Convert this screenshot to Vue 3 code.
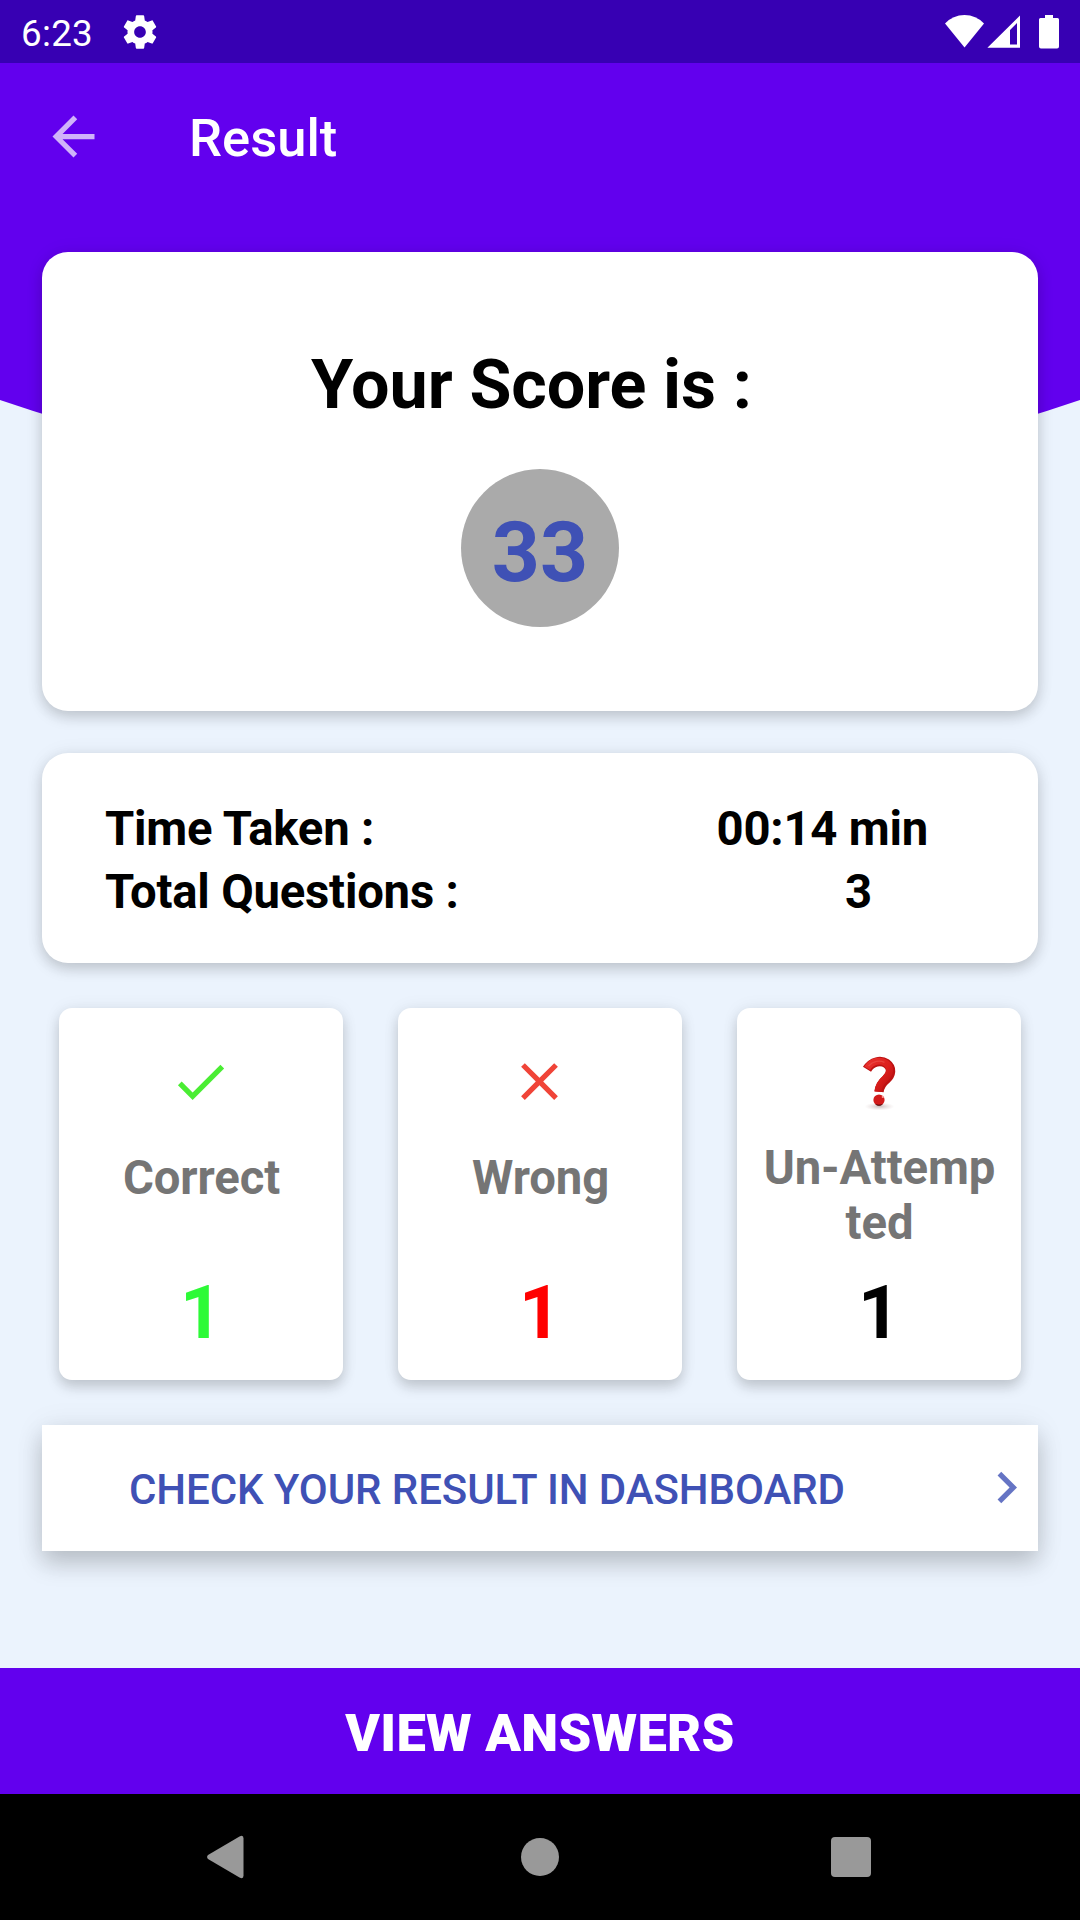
<script setup>
const stats = [
  { key: 'correct', label: 'Correct', count: 1 },
  { key: 'wrong', label: 'Wrong', count: 1 },
  { key: 'skipped', label: 'Un-Attempted', count: 1 },
]
</script>

<template>
  <div class="screen">
    <header class="status">
      <span class="clock">6:23</span>
      <svg class="gear" viewBox="0 0 24 24"><path fill="#fff" d="M19.43 12.98c.04-.32.07-.64.07-.98s-.03-.66-.07-.98l2.11-1.65c.19-.15.24-.42.12-.64l-2-3.46c-.12-.22-.39-.3-.61-.22l-2.49 1c-.52-.4-1.08-.73-1.69-.98l-.38-2.65C14.46 2.18 14.25 2 14 2h-4c-.25 0-.46.18-.49.42l-.38 2.65c-.61.25-1.17.59-1.69.98l-2.49-1c-.23-.09-.49 0-.61.22l-2 3.46c-.13.22-.07.49.12.64l2.11 1.65c-.04.32-.07.65-.07.98s.03.66.07.98l-2.11 1.65c-.19.15-.24.42-.12.64l2 3.46c.12.22.39.3.61.22l2.49-1c.52.4 1.08.73 1.69.98l.38 2.65c.03.24.24.42.49.42h4c.25 0 .46-.18.49-.42l.38-2.65c.61-.25 1.17-.59 1.69-.98l2.49 1c.23.09.49 0 .61-.22l2-3.46c.12-.22.07-.49-.12-.64l-2.11-1.65zM12 15.5c-1.93 0-3.500-1.570-3.500-3.500s1.570-3.500 3.500-3.500 3.500 1.570 3.500 3.500-1.570 3.500-3.500 3.500z" /></svg>
      <svg class="signals" viewBox="0 0 120 36" fill="#fff">
        <path d="M5 9.500Q13 1 24.500 1T44 9.500L24.500 33.500Z" />
        <path fill-rule="evenodd" d="M80 1.500V33.700H47.400ZM77 9 70 16V30.500H77Z" />
        <path d="M105 1h8v3h4.500q1.500 0 1.500 1.500v27q0 2-2 2h-16q-2 0-2-2v-27q0-1.500 1.500-1.500h4.500Z" />
      </svg>
    </header>

    <main class="body">
      <svg class="backdrop" viewBox="0 0 1080 432" preserveAspectRatio="none">
        <path fill="#6200ee" d="M0 0H1080V337Q540 521 0 337Z" />
      </svg>

      <div class="content">
        <nav class="toolbar">
          <svg class="back" viewBox="0 0 24 24"><path fill="#fff" fill-opacity=".7" d="M20 11H7.830l5.590-5.590L12 4l-8 8 8 8 1.410-1.410L7.830 13H20z" /></svg>
          <h1>Result</h1>
        </nav>

        <section class="card score">
          <h2>Your Score is : </h2>
          <div class="circle">33</div>
        </section>

        <section class="card details">
          <div class="row"><span>Time Taken :</span><span>00:14 min</span></div>
          <div class="row total"><span>Total Questions :</span><span>3</span></div>
        </section>

        <section class="stats">
          <article v-for="s in stats" :key="s.key" class="stat" :class="s.key">
            <svg v-if="s.key === 'correct'" viewBox="0 0 24 24"><path fill="#4aed33" d="M9 16.170 4.830 12l-1.420 1.410L9 19 21 7l-1.410-1.410z" /></svg>
            <svg v-else-if="s.key === 'wrong'" viewBox="0 0 24 24"><path fill="#f04438" d="M19 6.410 17.590 5 12 10.590 6.410 5 5 6.410 10.590 12 5 17.590 6.410 19 12 13.410 17.590 19 19 17.590 13.410 12z" /></svg>
            <svg v-else viewBox="0 0 63 63">
              <defs>
                <linearGradient id="tube" x1="0" y1="0" x2="1" y2="1">
                  <stop offset="0" stop-color="#e8302c" /><stop offset=".55" stop-color="#dc1e1c" /><stop offset="1" stop-color="#b81010" />
                </linearGradient>
                <radialGradient id="floor"><stop offset="0" stop-color="#6b4444" stop-opacity=".35" /><stop offset="1" stop-color="#b09090" stop-opacity="0" /></radialGradient>
              </defs>
              <ellipse cx="31.500" cy="56.500" rx="15" ry="4" fill="url(#floor)" />
              <path d="M19 19.300C24 11 33 10 38.500 13.500C44.500 18 43.500 24.500 38 29.500C33.500 33.300 31.500 36.500 31 41.800" fill="none" stroke="#bd1212" stroke-width="9.400" />
              <path d="M19.200 18.200C24 10.300 33 9.500 38 13.200C43.500 17.500 42.500 23.500 37 28.700C32.500 32.500 30.500 36 30 41.800" fill="none" stroke="url(#tube)" stroke-width="6.800" />
              <path d="M20.500 16C25 11 31.500 10 36.500 12.300" fill="none" stroke="#f0605a" stroke-width="1.400" stroke-opacity=".5" />
              <circle cx="31" cy="50" r="5.600" fill="#d21a1a" />
              <path d="M27 54Q31 57.700 35 54Q31 55.400 27 54Z" fill="#3b0505" />
              <circle cx="34.800" cy="46.900" r="1.100" fill="#ff9c98" />
            </svg>
            <p>{{ s.label }}</p>
            <strong>{{ s.count }}</strong>
          </article>
        </section>

        <button class="dashboard">
          <span>CHECK YOUR RESULT IN DASHBOARD</span>
          <svg class="chevron" viewBox="0 0 24 24"><path fill="#3f51b5" fill-opacity=".8" d="M10 6 8.590 7.410 13.170 12l-4.580 4.590L10 18l6-6z" /></svg>
        </button>
      </div>
    </main>

    <button class="answers">VIEW ANSWERS</button>

    <footer class="navbar">
      <svg class="nav-back" viewBox="0 0 37 44"><path fill="#999" d="M1 20 32.500 1.500Q36.500-.5 36.500 3.500V40.500Q36.500 44.500 32.500 42.500L1 24Q-.8 22 1 20Z" /></svg>
      <svg class="nav-home" viewBox="0 0 38 38"><circle cx="19" cy="19" r="19" fill="#999" /></svg>
      <svg class="nav-recent" viewBox="0 0 40 40"><rect width="40" height="40" rx="4" fill="#999" /></svg>
    </footer>
  </div>
</template>

<style>
body { margin: 0; }
</style>

<style scoped>
.screen {
  width: 1080px;
  height: 1920px;
  display: flex;
  flex-direction: column;
  background: #ebf3fd;
  font-family: Roboto, "Liberation Sans", sans-serif;
  overflow: hidden;
}
svg { display: block; flex: none; }
h1, h2, p { margin: 0; }
button { border: 0; padding: 0; font-family: inherit; }

.status {
  height: 63px;
  flex: none;
  box-sizing: border-box;
  padding: 0 20px 0 21px;
  display: flex;
  align-items: center;
  background: #3700b3;
  color: #fff;
}
.clock { font-size: 36.750px; line-height: 44px; width: 99px; padding-top: 4px; letter-spacing: .3px; }
.gear { width: 40px; height: 40px; }
.signals { width: 120px; height: 36px; margin-left: auto; }

.body { position: relative; flex: 1; }
.backdrop { position: absolute; inset: 0 0 auto; width: 1080px; height: 432px; }
.content { position: relative; padding: 0 42px; }

.toolbar { height: 147px; display: flex; align-items: center; color: #fff; }
.back { width: 63px; height: 63px; }
.toolbar h1 { margin-left: 84px; padding-top: 3px; font-size: 52.500px; font-weight: 500; line-height: 62px; }

.card {
  box-sizing: border-box;
  background: #fff;
  border-radius: 26px;
  box-shadow: 0 6px 14px rgba(0, 0, 0, .17), 0 0 20px rgba(0, 0, 0, .06);
}
.score {
  height: 459px;
  margin-top: 42px;
  padding-top: 93px;
  display: flex;
  flex-direction: column;
  align-items: center;
}
.score h2 { font-size: 68.250px; line-height: 80px; font-weight: 700; letter-spacing: -.1px; white-space: pre; color: #000; }
.circle {
  width: 158px;
  height: 158px;
  margin-top: 44px;
  box-sizing: border-box;
  padding-top: 5px;
  border-radius: 50%;
  background: #aaa;
  color: #3f51b5;
  font-size: 84px;
  line-height: 158px;
  font-weight: 700;
  text-align: center;
}
.details {
  height: 210px;
  margin-top: 42px;
  padding: 45px 110px 0 63px;
}
.row {
  display: flex;
  justify-content: space-between;
  font-size: 47.250px;
  line-height: 63px;
  font-weight: 700;
  letter-spacing: -.22px;
  color: #000;
}
.total { padding-right: 56px; }

.stats { display: flex; gap: 55px; margin: 45px 17px 0; }
.stat {
  width: 284px;
  height: 372px;
  box-sizing: border-box;
  padding-top: 42px;
  display: flex;
  flex-direction: column;
  align-items: center;
  background: #fff;
  border-radius: 13px;
  box-shadow: 0 7px 13px rgba(0, 0, 0, .17), 0 0 18px rgba(0, 0, 0, .06);
}
.stat svg { width: 63px; height: 63px; margin-right: 1px; }
.skipped svg { margin: 0 -1px 0 0; }
.stat p {
  width: 236px;
  height: 129px;
  box-sizing: border-box;
  padding: 38px 0 0 1px;
  font-size: 47.250px;
  line-height: 55px;
  font-weight: 700;
  letter-spacing: -.1px;
  color: #757575;
  text-align: center;
  word-break: break-all;
}
.skipped p { padding-top: 28px; }
.stat strong { font-size: 73.500px; line-height: 86px; margin-top: 28px; }
.correct strong { color: #2dfa37; }
.wrong strong { color: #f00; }
.skipped strong { color: #000; }

.dashboard {
  width: 996px;
  height: 126px;
  margin-top: 45px;
  padding-left: 87px;
  display: flex;
  align-items: center;
  justify-content: space-between;
  background: #fff;
  color: #3f51b5;
  font-size: 42px;
  font-weight: 500;
  line-height: 50px;
  letter-spacing: -.08px;
  white-space: nowrap;
  box-shadow: 0 13px 22px rgba(0, 0, 0, .18), 0 2px 28px rgba(0, 0, 0, .08);
}
.dashboard span { padding-top: 3px; }
.chevron { width: 63px; height: 63px; margin-bottom: 1px; }
.answers {
  height: 126px;
  flex: none;
  padding-top: 4px;
  background: #6200ee;
  color: #fff;
  font-size: 52.500px;
  font-weight: 900;
  letter-spacing: .25px;
}
.navbar {
  height: 126px;
  flex: none;
  box-sizing: border-box;
  padding: 0 209px 0 207px;
  display: flex;
  align-items: center;
  justify-content: space-between;
  background: #000;
}
.nav-back { width: 37px; height: 44px; }
.nav-home { width: 38px; height: 38px; margin-left: 4px; }
.nav-recent { width: 40px; height: 40px; }
</style>
